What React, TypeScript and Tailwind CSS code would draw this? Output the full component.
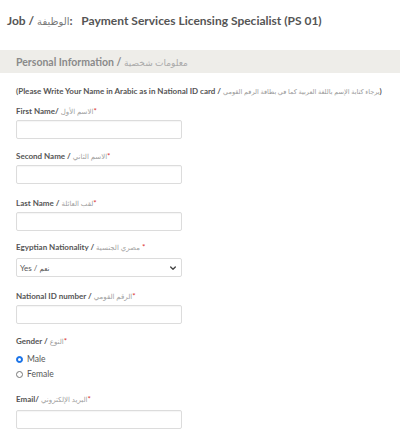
const font = "font-['Lato','DejaVu_Sans',sans-serif]";

function Ar({ children }: { children: React.ReactNode }) {
  return <span className="font-normal text-[#a0a0a0] text-[7px]">{children}</span>;
}

function Label({ en, ar, spaced = false }: { en: string; ar: string; spaced?: boolean }) {
  return (
    <label className="block text-[8px] font-bold text-[#555] leading-[10px] whitespace-nowrap">
      {en} <Ar>{ar}</Ar>
      <span className="text-[#d33] font-normal">{spaced ? ' *' : '*'}</span>
    </label>
  );
}

function TextInput({ gap = 'mt-[4px]' }: { gap?: string }) {
  return <input type="text" className={`${gap} block w-[166px] h-[19px] border border-[#dcdcdc] rounded-[2px] bg-white shadow-[inset_0_1px_1px_rgba(0,0,0,0.04)]`} />;
}

export default function App() {
  return (
    <div className={`${font} bg-white w-[400px] h-[439px] overflow-hidden`}>
      {/* Job title */}
      <div className="pl-[7px] pt-[13px] h-[50px]">
        <h1 className="text-[12px] font-bold text-[#555] leading-[16px] whitespace-nowrap">
          Job / <span className="font-normal text-[#777] text-[10px]">الوظيفة</span>:&nbsp;&nbsp; Payment Services Licensing Specialist (PS 01)
        </h1>
      </div>

      {/* Section header */}
      <div className="h-[23px] bg-[#eeede9] pl-[16px] flex items-center pt-[2px]">
        <span className="text-[10.5px] font-bold text-[#8a8a8a]">
          Personal Information / <span className="font-normal text-[#aaa] text-[9px]">معلومات شخصية</span>
        </span>
      </div>

      <div className="pl-[16px] pt-[12px]">
        <p className="text-[8px] font-bold text-[#555] leading-[12px] whitespace-nowrap">
          (Please Write Your Name in Arabic as in National ID card /{' '}
          <span className="font-normal text-[#999] text-[6.5px]">يرجاء كتابة الإسم باللغة العربية كما في بطاقة الرقم القومي</span>)
        </p>

        <div className="mt-[8px]">
          <Label en="First Name/" ar="الاسم الأول" />
          <TextInput />
        </div>
        <div className="mt-[12px]">
          <Label en="Second Name /" ar="الاسم الثاني" />
          <TextInput />
        </div>
        <div className="mt-[14px]">
          <Label en="Last Name /" ar="لقب العائلة" />
          <TextInput />
        </div>
        <div className="mt-[11px]">
          <Label en="Egyptian Nationality /" ar="مصري الجنسية" spaced />
          <div className="mt-[6px] w-[166px] h-[19px] border border-[#dcdcdc] rounded-[2px] flex items-center justify-between px-[3px]">
            <span className="text-[8px] text-[#555]">
              Yes / <span className="text-[7px]">نعم</span>
            </span>
            <svg className="w-[8px] h-[8px] mr-[1px]" viewBox="0 0 24 24" fill="none" stroke="#444" strokeWidth={4} strokeLinecap="round" strokeLinejoin="round">
              <path d="M5 9l7 7 7-7" />
            </svg>
          </div>
        </div>
        <div className="mt-[14px]">
          <Label en="National ID number /" ar="الرقم القومي" />
          <TextInput />
        </div>
        <div className="mt-[12px]">
          <Label en="Gender /" ar="النوع" />
          <div className="mt-[8px] flex flex-col gap-[5px]">
            <div className="flex items-center gap-[4px] text-[8.5px] text-[#555] leading-[10px]">
              <span className="w-[7px] h-[7px] rounded-full bg-[#1a73e8] border border-[#1a73e8] flex items-center justify-center">
                <span className="w-[3px] h-[3px] rounded-full bg-white" />
              </span>
              Male
            </div>
            <div className="flex items-center gap-[4px] text-[8.5px] text-[#555] leading-[10px]">
              <span className="w-[7px] h-[7px] rounded-full bg-white border border-[#777]" />
              Female
            </div>
          </div>
        </div>
        <div className="mt-[15px]">
          <Label en="Email/" ar="البريد الإلكتروني" />
          <TextInput gap="mt-[6px]" />
        </div>
      </div>
    </div>
  );
}
